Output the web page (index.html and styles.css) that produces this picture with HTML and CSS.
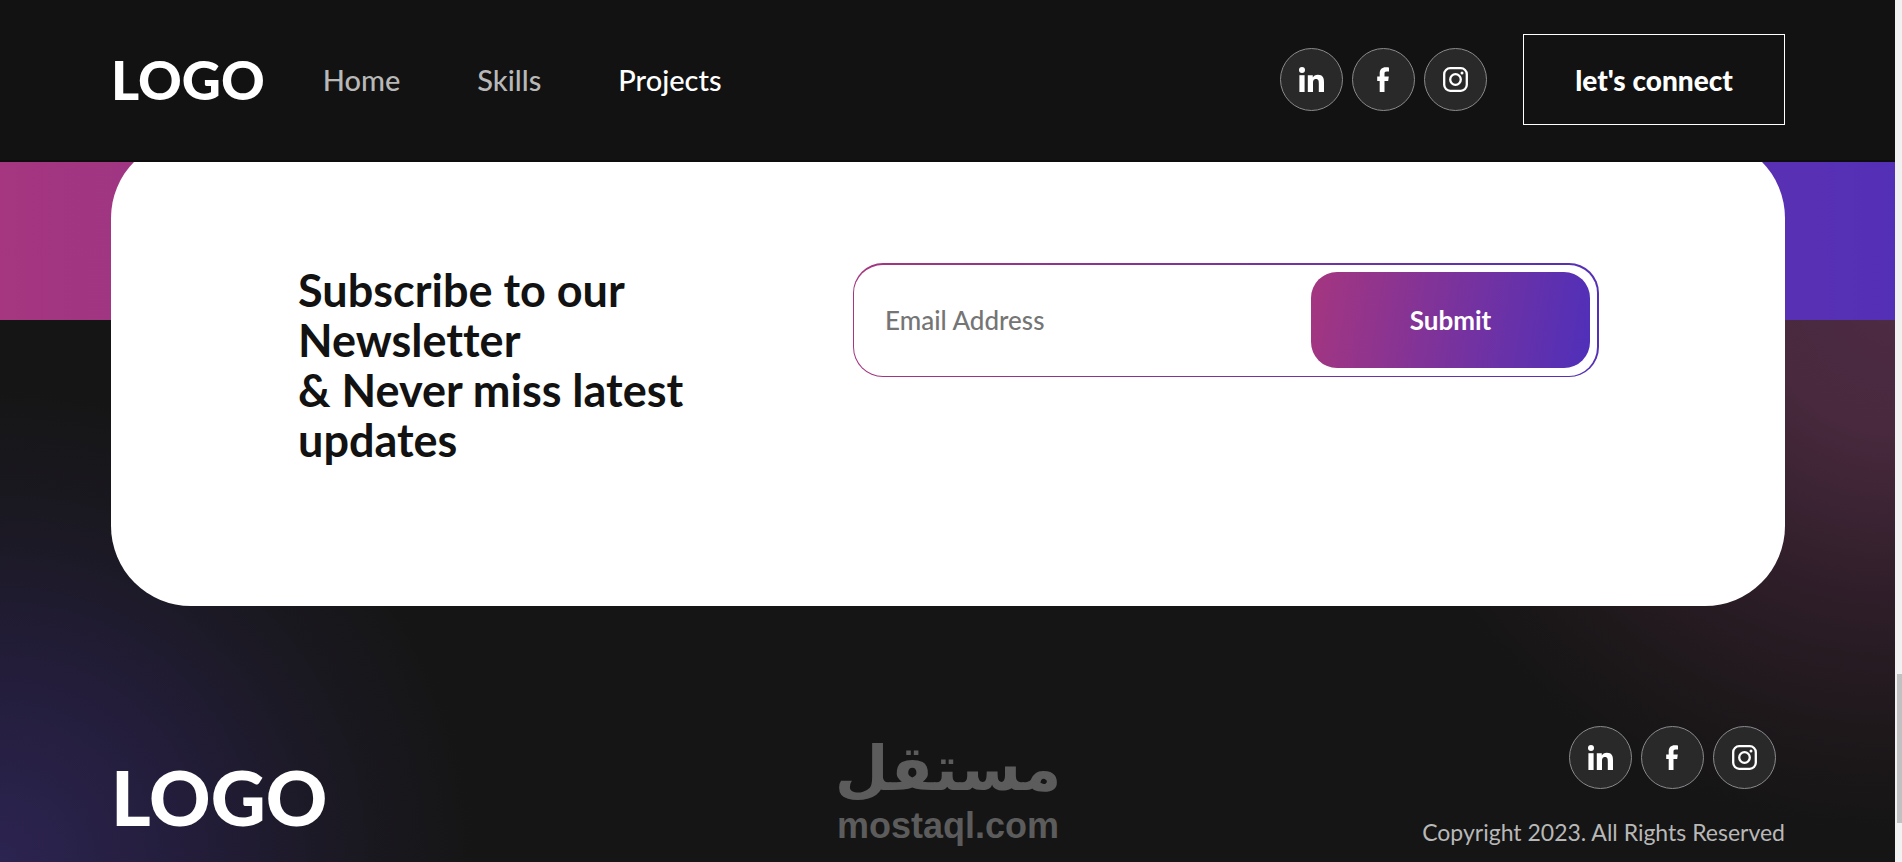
FILE: index.html
```html
<!DOCTYPE html>
<html lang="en">
<head>
    <meta charset="UTF-8">
    <meta name="viewport" content="width=device-width, initial-scale=1.0">
    <title>Portfolio</title>
    <link rel="stylesheet" href="styles.css">
</head>
<body>
    <!-- icons shared by the navbar and the footer -->
    <svg class="icon-defs" aria-hidden="true">
        <symbol id="icon-linkedin" viewBox="0 0 25 25">
            <circle cx="3" cy="3" r="3"/>
            <path d="M0.400 8.200h5.200V25H0.400z"/>
            <path d="M8.800 8.200h5v2.300c.7-1.400 2.500-2.700 5.100-2.700 5 0 6.100 3.200 6.100 7.600V25h-5.200v-8.400c0-2.100 0-4.600-2.800-4.600s-3 2.200-3 4.500V25H8.800z"/>
        </symbol>
        <symbol id="icon-facebook" viewBox="0 0 25 25">
            <path d="M8.700 25V13.900H6.200V9.600h2.500V6.500C8.700 2.400 11 .2 14.700.2c1.500 0 2.900.1 3.300.2v4h-2.300c-1.800 0-2.200.9-2.200 2.300v2.900h4.300l-.6 4.300h-3.700V25z"/>
        </symbol>
        <symbol id="icon-instagram" viewBox="0 0 25 25">
            <rect x="1.200" y="1.200" width="22.600" height="22.600" rx="6" fill="none" stroke="currentColor" stroke-width="2.300"/>
            <circle cx="12.500" cy="12.500" r="5.300" fill="none" stroke="currentColor" stroke-width="2.300"/>
            <circle cx="19" cy="6" r="1.500"/>
        </symbol>
    </svg>

    <div class="page">
        <header class="navbar">
            <div class="container navbar-inner">
                <a class="logo" href="#">LOGO</a>
                <nav class="nav-links">
                    <a href="#home">Home</a>
                    <a href="#skills">Skills</a>
                    <a class="active" href="#projects">Projects</a>
                </nav>
                <div class="social">
                    <a href="#" aria-label="LinkedIn"><svg><use href="#icon-linkedin"/></svg></a>
                    <a href="#" aria-label="Facebook"><svg><use href="#icon-facebook"/></svg></a>
                    <a href="#" aria-label="Instagram"><svg><use href="#icon-instagram"/></svg></a>
                </div>
                <button class="connect" type="button">let's connect</button>
            </div>
        </header>

        <footer class="footer">
            <div class="container">
                <section class="newsletter">
                    <h3>Subscribe to our Newsletter<br>&amp; Never miss latest updates</h3>
                    <form class="email-form">
                        <input type="email" placeholder="Email Address" aria-label="Email Address">
                        <button type="submit">Submit</button>
                    </form>
                </section>

                <div class="footer-bottom">
                    <a class="logo logo-large" href="#">LOGO</a>
                    <div class="mostaql">
                        <span class="mostaql-ar" lang="ar">مستقل</span>
                        <span class="mostaql-en">mostaql.com</span>
                    </div>
                    <div class="footer-info">
                        <div class="social">
                            <a href="#" aria-label="LinkedIn"><svg><use href="#icon-linkedin"/></svg></a>
                            <a href="#" aria-label="Facebook"><svg><use href="#icon-facebook"/></svg></a>
                            <a href="#" aria-label="Instagram"><svg><use href="#icon-instagram"/></svg></a>
                        </div>
                        <p>Copyright 2023. All Rights Reserved</p>
                    </div>
                </div>
            </div>
        </footer>
    </div>
    <div class="scrollbar"><div class="scrollbar-thumb"></div></div>
</body>
</html>
```
FILE: styles.css
```css
* {
    margin: 0;
    padding: 0;
    box-sizing: border-box;
}

body {
    display: flex;
    min-height: 100vh;
    background-color: #151515;
    color: #fff;
    font-family: Lato, "Liberation Sans", sans-serif;
    font-variant-ligatures: none;
}

a {
    color: inherit;
    text-decoration: none;
}

button {
    font-family: inherit;
    cursor: pointer;
}

.icon-defs {
    position: absolute;
    width: 0;
    height: 0;
}

.page {
    flex: 1;
    display: flex;
    flex-direction: column;
    min-width: 0;
}

.container {
    width: 100%;
    padding: 0 110px 0 111px;
}

/* navbar */
.navbar {
    position: sticky;
    top: 0;
    z-index: 10;
    background-color: #121212;
    border-bottom: 2px solid #0d0d0d;
}

.navbar-inner {
    display: flex;
    align-items: center;
    padding-top: 34px;
    padding-bottom: 35px;
}

.logo {
    font-size: 54px;
    font-weight: 900;
    line-height: 1;
}

.nav-links {
    display: flex;
    gap: 77px;
    margin-left: 58px;
    font-size: 29px;
    font-weight: 500;
    line-height: 36px;
}

.nav-links a {
    color: #b8b8b8;
}

.nav-links a.active {
    color: #fff;
}

.social {
    display: flex;
    gap: 9px;
}

.social a {
    display: flex;
    align-items: center;
    justify-content: center;
    width: 63px;
    height: 63px;
    border: 1px solid #8a8a8e;
    border-radius: 50%;
    background-color: #292929;
}

.social svg {
    width: 25px;
    height: 25px;
    fill: currentColor;
}

.navbar .social {
    margin-left: auto;
}

.connect {
    width: 262px;
    height: 91px;
    margin-left: 36px;
    border: 1px solid #fff;
    background: transparent;
    color: #fff;
    font-size: 28px;
    font-weight: 900;
}

/* footer */
.footer {
    flex: 1;
    margin-top: -24px;
    background:
        linear-gradient(90deg, #aa367c -6%, #4a2fbd 112%) top / 100% 182px no-repeat,
        radial-gradient(circle 480px at 0 100%, #2c2451, #231d3a 40%, #1a1820 75%, transparent),
        radial-gradient(circle 540px at 100% 160px, #4d2b44, #48293d 25%, #2f1e29 55%, #1e181b 80%, transparent),
        #151515;
}

.newsletter {
    display: flex;
    align-items: flex-start;
    justify-content: space-between;
    min-height: 468px;
    padding: 125px 186px 93px 187px;
    border-radius: 80px;
    background-color: #fff;
    color: #121212;
}

.newsletter h3 {
    width: 420px;
    padding-top: 2px;
    font-size: 45px;
    font-weight: 700;
    line-height: 50px;
}

/* gradient outline: white fill over a gradient border box */
.email-form {
    display: flex;
    width: 746px;
    height: 114px;
    padding: 7px 7px 8px 31px;
    border: solid transparent;
    border-width: 2px 2px 1px 1px;
    border-radius: 30px;
    background:
        linear-gradient(#fff, #fff) padding-box,
        linear-gradient(90deg, #aa367c -6%, #4a2fbd 112%) border-box;
}

.email-form input {
    flex: 1;
    min-width: 0;
    border: 0;
    outline: none;
    background: transparent;
    font-family: inherit;
    font-size: 26px;
    font-weight: 500;
    color: #121212;
}

.email-form input::placeholder {
    color: #757575;
}

.email-form button {
    width: 279px;
    border: 0;
    border-radius: 26px;
    background: linear-gradient(99deg, #aa367c -6%, #4a2fbd 106%);
    color: #fff;
    font-size: 26px;
    font-weight: 700;
}

.footer-bottom {
    display: grid;
    grid-template-columns: 1fr auto 1fr;
    align-items: end;
    padding-top: 120px;
}

.logo-large {
    padding-bottom: 26px;
    font-size: 76px;
}

.mostaql {
    display: flex;
    flex-direction: column;
    align-items: center;
    padding-bottom: 14px;
    color: #5c5c5c;
}

.mostaql-ar {
    font-family: "DejaVu Sans", sans-serif;
    font-size: 62px;
    font-weight: 700;
    line-height: 72px;
}

.mostaql-en {
    font-family: "Liberation Sans", sans-serif;
    font-size: 36px;
    font-weight: 700;
    line-height: 42px;
}

.footer-info {
    display: flex;
    flex-direction: column;
    align-items: flex-end;
}

.footer-info .social {
    margin-right: 9px;
}

.footer-info p {
    padding: 29px 0 15px;
    color: #b8b8b8;
    font-size: 23px;
    line-height: 28px;
}

/* page scroll indicator */
.scrollbar {
    width: 7px;
    padding-left: 2px;
    background-color: #f1f1f1;
}

.scrollbar-thumb {
    height: 149px;
    margin-top: 674px;
    background-color: #c1c1c1;
}
```
